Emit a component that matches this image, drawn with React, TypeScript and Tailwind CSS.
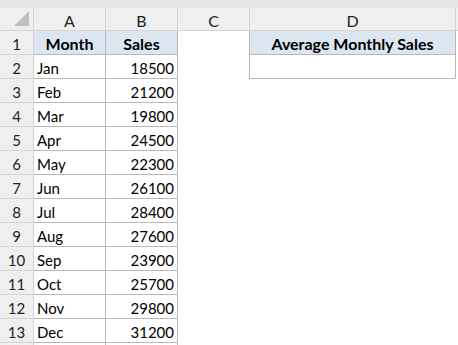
import React from 'react';

const rows: [string, number][] = [
  ['Jan', 18500],
  ['Feb', 21200],
  ['Mar', 19800],
  ['Apr', 24500],
  ['May', 22300],
  ['Jun', 26100],
  ['Jul', 28400],
  ['Aug', 27600],
  ['Sep', 23900],
  ['Oct', 25700],
  ['Nov', 29800],
  ['Dec', 31200],
];

const rowHead = 'h-6 pt-[3px] border-r border-b border-[#d4d4d4] bg-[#efefef] flex items-center justify-center text-[#222]';
const tableCell = 'h-6 pt-[3px] border-r border-b border-[#b8b8b8] flex items-center px-[3px]';
const headCell = `${tableCell} justify-center bg-[#dce6f1] font-bold text-[16px]`;

export default function App() {
  return (
    <div className="w-[458px] h-[345px] overflow-hidden bg-white font-['Lato',sans-serif] text-[15px] text-black leading-none">
      {/* toolbar strip */}
      <div className="h-2 bg-[#e6e6e6]" />

      <div className="grid grid-cols-[34px_72px_72px_72px_206px_1fr]">
        {/* column headers */}
        <div className="h-[23px] border-r border-b border-[#d4d4d4] bg-[#efefef] relative">
          <div className="absolute right-[4px] bottom-[4px] w-0 h-0 border-l-[15px] border-l-transparent border-b-[15px] border-b-[#bfbfbf]" />
        </div>
        {['A', 'B', 'C', 'D'].map((c) => (
          <div key={c} className="h-[23px] pt-[3px] border-r border-b border-[#d4d4d4] bg-[#efefef] flex items-center justify-center text-[16px] text-[#222]">
            {c}
          </div>
        ))}
        <div className="h-[23px] border-b border-[#d4d4d4] bg-[#efefef]" />

        {/* row 1 */}
        <div className={rowHead}>1</div>
        <div className={headCell}>Month</div>
        <div className={headCell}>Sales</div>
        <div className="h-6 border-r border-[#b8b8b8]" />
        <div className={headCell}>Average Monthly Sales</div>
        <div />

        {rows.map(([m, v], i) => (
          <React.Fragment key={m}>
            <div className={rowHead}>{i + 2}</div>
            <div className={tableCell}>{m}</div>
            <div className={`${tableCell} justify-end`}>{v}</div>
            <div className={`h-6 border-r ${i === 0 ? 'border-[#b8b8b8]' : 'border-transparent'}`} />
            {i === 0 ? <div className={tableCell} /> : <div className="h-6" />}
            <div />
          </React.Fragment>
        ))}

        <div className="h-6 border-r border-[#d4d4d4] bg-[#efefef]" />
        <div className="h-6 border-r border-[#b8b8b8]" />
        <div className="h-6 border-r border-[#b8b8b8]" />
      </div>
    </div>
  );
}
